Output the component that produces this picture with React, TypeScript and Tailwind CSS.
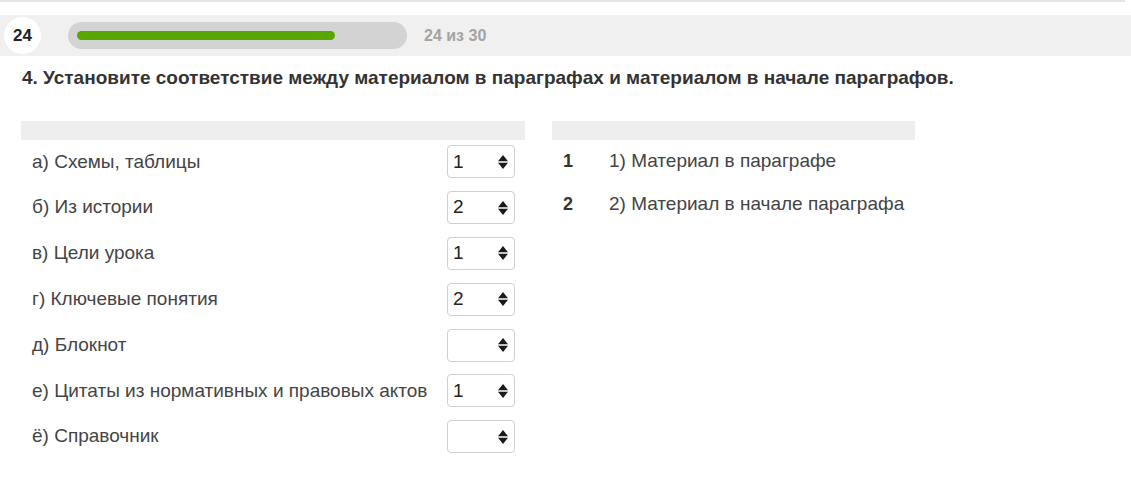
const rows = [
  { label: "а) Схемы, таблицы", value: "1" },
  { label: "б) Из истории", value: "2" },
  { label: "в) Цели урока", value: "1" },
  { label: "г) Ключевые понятия", value: "2" },
  { label: "д) Блокнот", value: "" },
  { label: "е) Цитаты из нормативных и правовых актов", value: "1" },
  { label: "ё) Справочник", value: "" },
];

const answers = [
  { num: "1", text: "1) Материал в параграфе" },
  { num: "2", text: "2) Материал в начале параграфа" },
];

function SortArrows() {
  return (
    <svg width="10" height="14" viewBox="0 0 10 14" className="fill-[#1a1a1a]">
      <polygon points="5,0 10,6.3 0,6.3" />
      <polygon points="0,7.7 10,7.7 5,14" />
    </svg>
  );
}

function FakeSelect({ value }: { value: string }) {
  return (
    <div className="flex h-[33px] w-[68px] items-center justify-between rounded-[4px] border border-[#cfcfcf] bg-white pl-[5px] pr-[6px] text-[19px] text-[#222]">
      <span>{value}</span>
      <SortArrows />
    </div>
  );
}

export default function App() {
  return (
    <div className="h-[495px] w-[1131px] bg-white font-['Liberation_Sans',Arial,sans-serif] text-[#444]">
      <div className="h-[2px] w-[1125px] bg-[#e3e3e3]" />

      {/* progress band */}
      <div className="mt-[13px] flex h-[41px] items-center bg-[#f0f0f0] pl-[4px]">
        <div className="flex h-[37px] w-[37px] items-center justify-center rounded-full bg-white text-[17px] font-bold text-[#222]">
          24
        </div>
        <div className="ml-[27px] flex h-[27px] w-[339px] items-center rounded-full bg-[#d3d3d3] px-[9px]">
          <div className="h-[9px] w-[258px] rounded-full bg-[#58a700]" />
        </div>
        <span className="ml-[17px] text-[16px] font-bold text-[#a3a3a3]">24 из 30</span>
      </div>

      <h2 className="mt-[9px] pl-[22px] text-[19px] font-bold leading-[26px] text-[#333]">
        4. Установите соответствие между материалом в параграфах и материалом в начале параграфов.
      </h2>

      <div className="mt-[30px] flex items-start pl-[21px]">
        {/* left table */}
        <div className="w-[504px]">
          <div className="h-[19px] bg-[#eeeeee]" />
          <div className="-mt-[1px]">
            {rows.map((r) => (
              <div key={r.label} className="flex h-[45.8px] items-center justify-between pl-[11px] pr-[10px]">
                <span className="text-[19px]">{r.label}</span>
                <FakeSelect value={r.value} />
              </div>
            ))}
          </div>
        </div>

        {/* right table */}
        <div className="ml-[27px] w-[363px]">
          <div className="h-[19px] bg-[#eeeeee]" />
          <div>
            {answers.map((a) => (
              <div key={a.num} className="flex h-[43px] items-center">
                <span className="w-[57px] pl-[11px] text-[18px] font-bold text-[#333]">{a.num}</span>
                <span className="text-[19px]">{a.text}</span>
              </div>
            ))}
          </div>
        </div>
      </div>
    </div>
  );
}
